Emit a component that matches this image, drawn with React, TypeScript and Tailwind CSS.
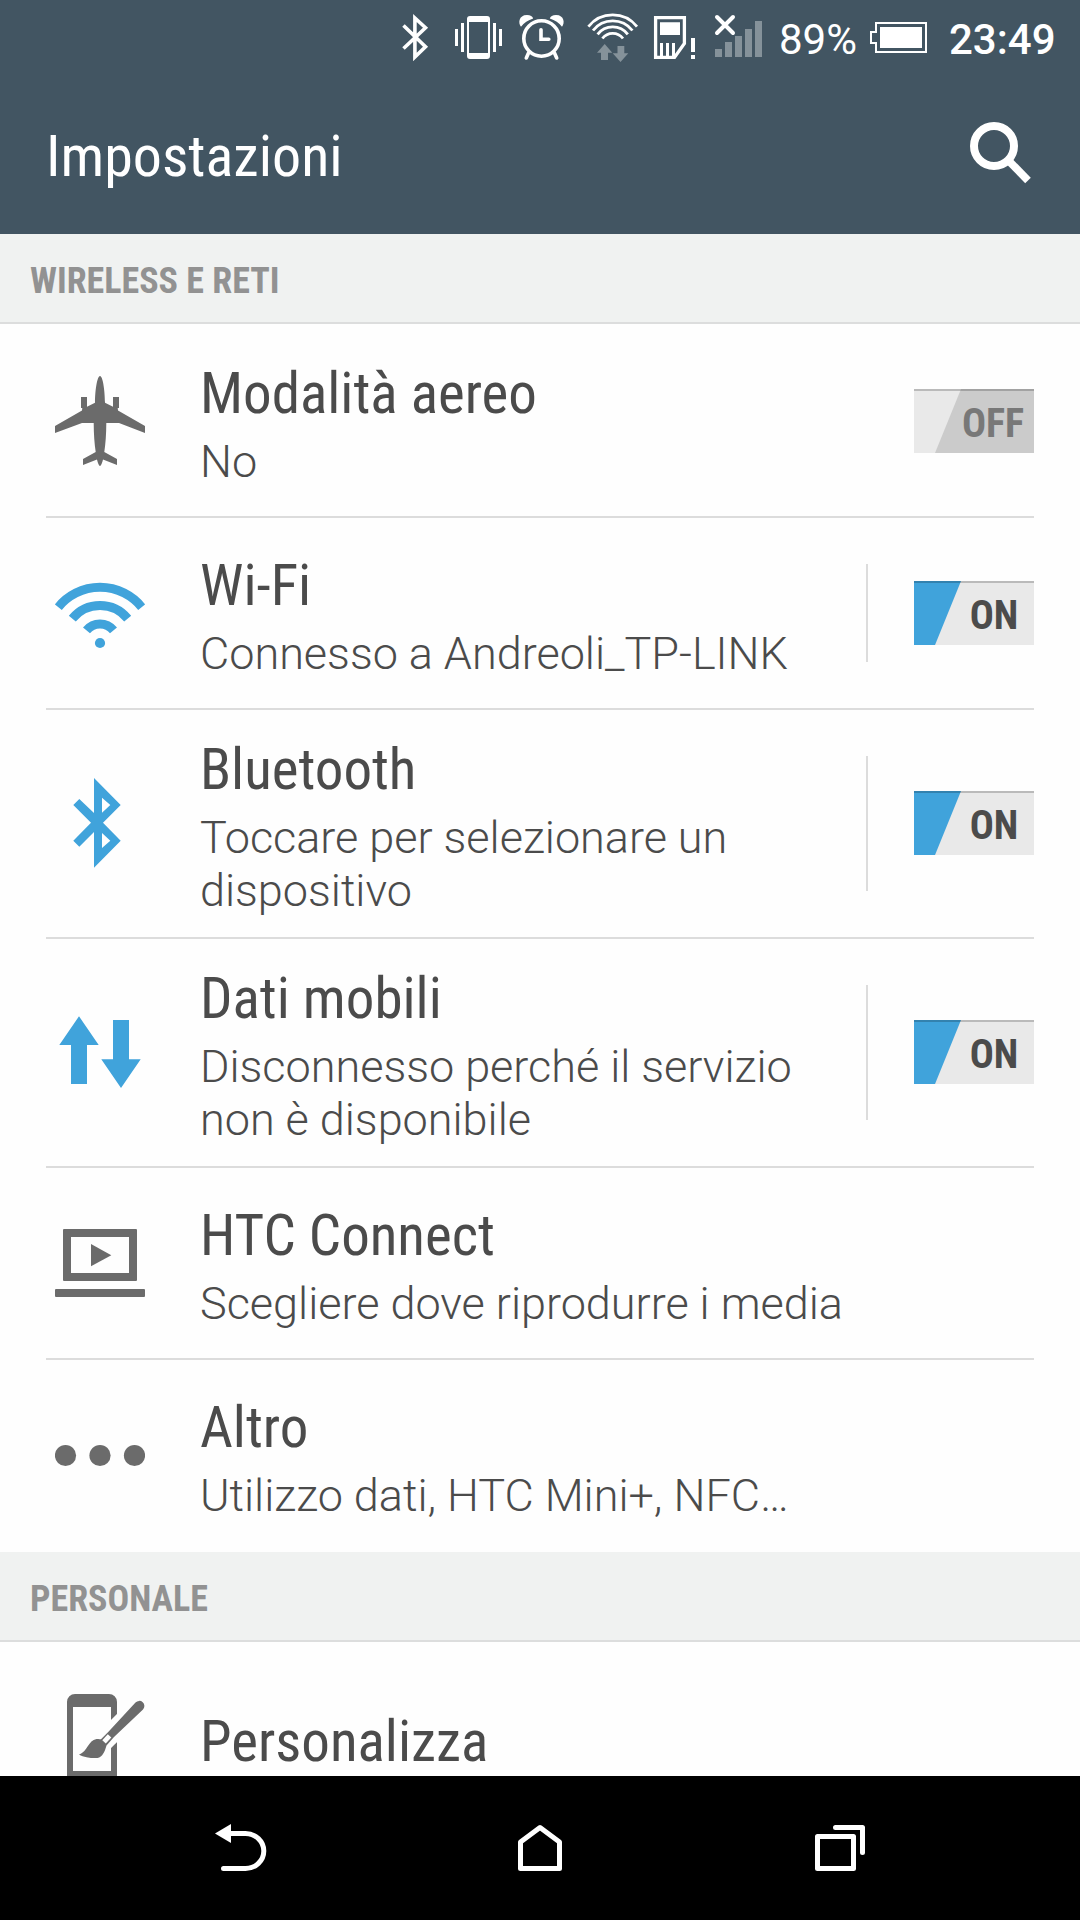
import React from "react";

const CONDENSED = "font-['Roboto_Condensed',Roboto,sans-serif] [font-stretch:75%]";

function Toggle({ on }: { on: boolean }) {
  return (
    <div
      className={`relative flex h-16 w-[120px] shrink-0 items-center justify-center ${on ? "bg-[#e9e9e9] pl-[40px]" : "bg-[#cbcbcb] pl-[38px]"}`}
    >
      <div
        className={`absolute inset-0 [clip-path:polygon(0_0,47px_0,21px_64px,0_64px)] ${on ? "bg-[#40a3db]" : "bg-[#e9e9e9]"}`}
      />
      <div className="absolute inset-x-0 top-0 h-0.5 bg-black/20" />
      <span
        className={`relative pt-[5px] text-[40px] leading-none font-bold ${CONDENSED} ${on ? "text-[#4b4b4b]" : "text-[#787878]"}`}
      >
        {on ? "ON" : "OFF"}
      </span>
    </div>
  );
}

function Icon({ children, className }: { children: React.ReactNode; className: string }) {
  return (
    <svg viewBox="0 0 90 90" className={`size-[90px] shrink-0 ${className}`} fill="currentColor">
      {children}
    </svg>
  );
}

const AirplaneIcon = (
  <Icon className="text-[#6b6b6b]">
    <path d="M45 0C42.5 0 40.2 12 40 26.7L32 30.8V21H26V32H27.3L27 34.5L0 50V57L27 47H38.7C38.7 58 39.5 68 40.7 76L28 83V89L42 83.6C42.8 87 44 90 45 90C46 90 47.2 87 48 83.6L62 89V83L49.3 76C50.5 68 51.3 58 51.3 47H64L90 57V50L63 34.5L62.7 32H64V21H58V30.8L50 26.7C49.8 12 47.5 0 45 0Z" />
  </Icon>
);

const WifiIcon = (
  <Icon className="text-[#40a3db]">
    <g fill="none" stroke="currentColor" strokeWidth="9">
      <path d="M3.3 39.2A53.7 53.7 0 0 1 86.7 39.2" />
      <path d="M17.3 50.6A35.8 35.8 0 0 1 72.7 50.6" />
      <path d="M31.5 62.4A17.4 17.4 0 0 1 58.5 62.4" />
    </g>
    <circle cx="45" cy="75" r="5.1" />
  </Icon>
);

const BluetoothIcon = (
  <Icon className="text-[#40a3db]">
    <path
      fillRule="evenodd"
      d="M39 0L65.7 27L48 44.8L65.7 62.7L39 89.7V54L24.3 68.7L18.3 62.7L36 44.8L18.3 27L24.3 21L39 35ZM47 19.7V34.7L55.3 27ZM47 55V70L55.3 62.7Z"
    />
  </Icon>
);

const DataIcon = (
  <Icon className="text-[#40a3db]">
    <path d="M24 9.3L43.7 38H32V77H16V38H4.3Z" />
    <path d="M58 13H74V52.3H85.7L66 81L46.3 52.3H58Z" />
  </Icon>
);

const ConnectIcon = (
  <Icon className="text-[#6b6b6b]">
    <path fillRule="evenodd" d="M9 11H81A1 1 0 0 1 82 12V62A1 1 0 0 1 81 63H9A1 1 0 0 1 8 62V12A1 1 0 0 1 9 11ZM16 19V55H74V19Z" />
    <path d="M36 26L56.3 37.3L36 48.3Z" />
    <rect y="71" width="90" height="8" rx="1" />
  </Icon>
);

const MoreIcon = (
  <Icon className="text-[#6b6b6b]">
    <circle cx="10.5" cy="45.5" r="10.6" />
    <circle cx="45" cy="45.5" r="10.6" />
    <circle cx="79.5" cy="45.5" r="10.6" />
  </Icon>
);

const PersonalizeIcon = (
  <Icon className="text-[#6b6b6b]">
    <path fillRule="evenodd" d="M20 0H54A8 8 0 0 1 62 8V82A8 8 0 0 1 54 90H20A8 8 0 0 1 12 82V8A8 8 0 0 1 20 0ZM18 13V77H56V13Z" />
    <path d="M46 50L86 10" stroke="#fefefe" strokeWidth="20" />
    <path d="M24 60.7C33 57 33 46.500 41.500 45C43.500 44.700 45 45 46 45.300L53.700 37.500L80.500 8.500A5.100 5.100 0 0 1 88 15.500L59 43L51.500 51.500C50 57 47.500 63.300 42.500 64C36 64.400 29 63 24 60.700Z" />
    <path d="M47.300 46.300L52.800 40.200L56.300 43.500L50.800 49.500Z" fill="#fefefe" />
  </Icon>
);

type RowProps = {
  icon: React.ReactNode;
  title: string;
  lines?: string[];
  on?: boolean;
  split?: boolean;
  last?: boolean;
};

function Row({ icon, title, lines = [], on, split, last }: RowProps) {
  const tall = lines.length > 1;
  return (
    <div
      className={`mx-[46px] flex shrink-0 items-center border-b-2 pl-[9px] ${last ? "border-transparent" : "border-[#dcdcdc]"} ${tall ? "h-[229px]" : "h-48"}`}
    >
      <div className={tall ? "mb-px" : ""}>{icon}</div>
      <div
        className={`flex flex-1 flex-col gap-[9px] pl-[55px] whitespace-nowrap text-[#4b4b4b] ${lines.length > 0 ? "pt-2" : "pt-[5px]"}`}
      >
        <div className={`text-[57px] leading-[64px] ${CONDENSED}`}>{title}</div>
        {lines.length > 0 && (
          <div className="font-[Roboto,sans-serif] text-[45px] leading-[53px] font-light tracking-[-0.02px]">
            {lines.map((l) => (
              <div key={l}>{l}</div>
            ))}
          </div>
        )}
      </div>
      {split && <div className="my-[46px] mr-[46px] w-0.5 self-stretch bg-[#dcdcdc]" />}
      {on !== undefined && (
        <div className={tall ? "mb-px" : ""}>
          <Toggle on={on} />
        </div>
      )}
    </div>
  );
}

function SectionHeader({ children }: { children: React.ReactNode }) {
  return (
    <div
      className={`flex h-[90px] shrink-0 items-center border-b-2 border-[#dcdddd] bg-[#f0f2f1] pt-1.5 pl-[30px] text-[36px] leading-none font-bold text-[#929292] ${CONDENSED}`}
    >
      {children}
    </div>
  );
}

function StatusBar() {
  return (
    <div className="flex h-[75px] shrink-0 items-start font-[Roboto,sans-serif] text-white">
      <svg viewBox="400 0 30 75" className="ml-[400px] h-[75px] w-[30px]" fill="none" stroke="currentColor" strokeWidth="3.6">
        <path d="M403.500 25.500L425.500 46.700L414.900 57V18L425.500 27.700L403.500 48.500" />
      </svg>
      <svg viewBox="454 0 50 75" className="ml-6 h-[75px] w-[50px]" fill="currentColor">
        <path fillRule="evenodd" d="M470 16H487A3 3 0 0 1 490 19V56A3 3 0 0 1 487 59H470A3 3 0 0 1 467 56V19A3 3 0 0 1 470 16ZM469 22V53H488V22Z" />
        <path d="M455 29h3v17h-3zM461 23h3v29h-3zM493 23h3v29h-3zM499 29h3v17h-3z" />
      </svg>
      <svg viewBox="518 0 48 75" className="ml-3.5 h-[75px] w-12" fill="none" stroke="currentColor" strokeWidth="3.600" strokeLinecap="round">
        <circle cx="541.500" cy="38.500" r="17.700" />
        <path d="M541 29.800V39.300H548.800M528.500 53L526.300 58M554.500 53L556.700 58" />
        <path stroke="none" fill="currentColor" d="M521 26.700C518 23.500 518.500 15 527 15C530.500 15 532.500 16.500 533.200 18.500C528 20 524 23 521 26.700ZM562 26.700C565 23.500 564.500 15 556 15C552.500 15 550.500 16.500 549.800 18.500C555 20 559 23 562 26.700Z" />
      </svg>
      <svg viewBox="586 0 54 75" className="ml-5 h-[75px] w-[54px]" fill="none" stroke="currentColor" strokeWidth="2.800">
        <path d="M588.400 26.600A31 31 0 0 1 637 26.600M593 30.500A25 25 0 0 1 632.400 30.500M597.600 34.400A19 19 0 0 1 627.800 34.400M602.400 38.500A12.900 12.900 0 0 1 623 38.500" />
        <path stroke="none" fill="#85929a" d="M604.700 44L612.300 52.700H608V60H601V52.700H597ZM617.500 46H624.300V53.300H628.300L620.500 62L612.700 53.300H617.500Z" />
      </svg>
      <svg viewBox="652 0 46 75" className="ml-3 h-[75px] w-[46px]" fill="currentColor">
        <path fill="none" stroke="currentColor" strokeWidth="3.300" d="M655.600 17.600H684.400V43.500L674.500 57.400H655.600Z" />
        <path d="M660 22.300h20v12.700h-20zM660 43h3v13h-3zM666 43h3v13h-3zM672 43h3v13h-3zM691 38h4v14h-4zM691 55h4v4h-4z" />
      </svg>
      <svg viewBox="712 0 52 75" className="ml-3.5 h-[75px] w-[52px]">
        <path fill="#85929a" d="M715 49h7v8h-7zM725 42h7v15h-7zM735 36h7v21h-7zM745 29h7v28h-7zM755 21h7v36h-7z" />
        <path stroke="currentColor" strokeWidth="4" strokeLinecap="round" d="M717 17L733 33M733 17L717 33" />
      </svg>
      <span className="ml-[15px] w-[91px] pt-[15px] text-[42px] leading-[50px] font-normal">89%</span>
      <svg viewBox="870 0 58 75" className="h-[75px] w-[58px]">
        <path fill="none" stroke="currentColor" strokeWidth="2" d="M876 23H926V52H876V43H871V32H876Z" />
        <path fill="currentColor" d="M880 27h42v21h-42z" />
      </svg>
      <span className="ml-[21px] pt-[15px] text-[42px] leading-[50px] font-medium">23:49</span>
    </div>
  );
}

function NavBar() {
  return (
    <nav className="flex h-36 shrink-0 items-center justify-between bg-black px-[215px] text-white">
      <svg viewBox="0 0 52 48" className="h-12 w-[52px]" fill="currentColor">
        <path d="M0 9.500L16 0V19Z" />
        <path d="M14 9.500H30.500A18.300 17.500 0 0 1 30.500 44.500H8.500" fill="none" stroke="currentColor" strokeWidth="5" strokeLinecap="round" />
      </svg>
      <svg viewBox="0 0 44 48" className="mr-0.5 h-12 w-11" fill="none" stroke="currentColor" strokeWidth="5" strokeLinejoin="round">
        <path d="M2.500 44.500V18L22 3.500L41.500 18V44.500Z" />
      </svg>
      <svg viewBox="0 0 50 48" className="h-12 w-[50px]" fill="none" stroke="currentColor" strokeWidth="5" strokeLinejoin="round" strokeLinecap="round">
        <path d="M2.500 12.500H38.500V44.500H2.500ZM20.500 3.500H47.500V28.500" />
      </svg>
    </nav>
  );
}

export default function App() {
  return (
    <div className="flex h-[1920px] w-[1080px] flex-col overflow-hidden bg-[#fefefe]">
      <header className="flex h-[234px] shrink-0 flex-col bg-[#425562] text-white">
        <StatusBar />
        <div className="flex flex-1 items-start justify-between pr-12 pl-[46px]">
          <h1 className={`pt-[49px] text-[58px] leading-[64px] ${CONDENSED}`}>Impostazioni</h1>
          <svg viewBox="0 0 62 62" className="mt-[47px] size-[62px]" fill="none" stroke="currentColor">
            <circle cx="24" cy="24" r="20" strokeWidth="8" />
            <path d="M38 38L58 58.500" strokeWidth="7.800" />
          </svg>
        </div>
      </header>
      <main className="flex min-h-0 flex-1 flex-col overflow-hidden">
        <SectionHeader>WIRELESS E RETI</SectionHeader>
        <div className="flex shrink-0 flex-col pt-0.5">
          <Row icon={AirplaneIcon} title="Modalità aereo" lines={["No"]} on={false} />
          <Row icon={WifiIcon} title="Wi-Fi" lines={["Connesso a Andreoli_TP-LINK"]} on split />
          <Row icon={BluetoothIcon} title="Bluetooth" lines={["Toccare per selezionare un", "dispositivo"]} on split />
          <Row icon={DataIcon} title="Dati mobili" lines={["Disconnesso perché il servizio", "non è disponibile"]} on split />
          <Row icon={ConnectIcon} title="HTC Connect" lines={["Scegliere dove riprodurre i media"]} />
          <Row icon={MoreIcon} title="Altro" lines={["Utilizzo dati, HTC Mini+, NFC…"]} last />
        </div>
        <SectionHeader>PERSONALE</SectionHeader>
        <div className="flex shrink-0 flex-col pt-0.5">
          <Row icon={PersonalizeIcon} title="Personalizza" last />
        </div>
      </main>
      <NavBar />
    </div>
  );
}
